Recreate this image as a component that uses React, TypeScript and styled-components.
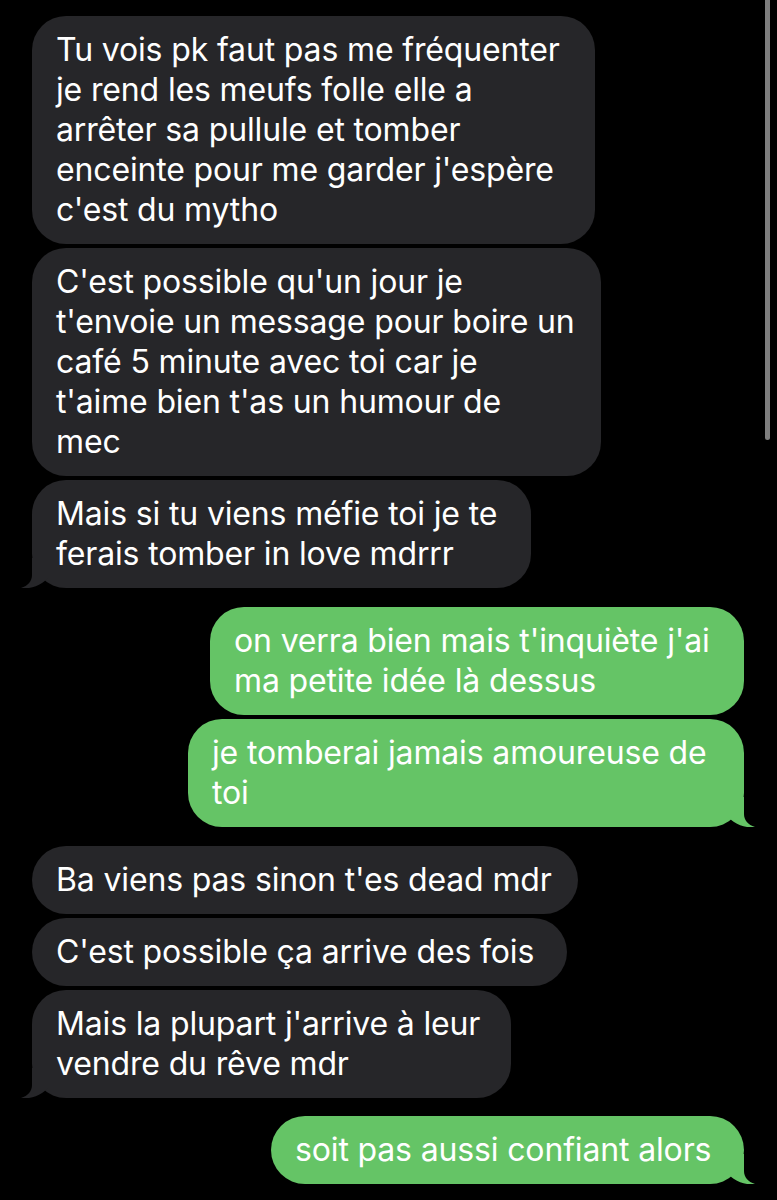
import React from "react";
import styled, { createGlobalStyle } from "styled-components";

const Global = createGlobalStyle`
  html, body { margin: 0; padding: 0; background: #000; }
  body { width: 777px; height: 1200px; overflow: hidden; }
`;

const Screen = styled.div`
  position: relative;
  width: 777px;
  height: 1200px;
  background: #000;
  box-sizing: border-box;
  padding-top: 16px;
  display: flex;
  flex-direction: column;
  font-family: Inter, "Noto Sans", "Liberation Sans", sans-serif;
`;

const Group = styled.div<{ $mine?: boolean; $top?: number }>`
  display: flex;
  flex-direction: column;
  gap: 4px;
  align-items: ${(p) => (p.$mine ? "flex-end" : "flex-start")};
  padding: 0 ${(p) => (p.$mine ? "33px" : "0")} 0 ${(p) => (p.$mine ? "0" : "32px")};
  margin-top: ${(p) => p.$top ?? 0}px;
`;

const Bubble = styled.div<{ $mine?: boolean; $w: number }>`
  position: relative;
  box-sizing: border-box;
  width: ${(p) => p.$w}px;
  padding: 14px 0 14px 24px;
  border-radius: 34px;
  background: ${(p) => (p.$mine ? "#65c466" : "#262629")};
  color: #fff;
  font-size: 32px;
  line-height: 40px;
  letter-spacing: -0.15px;
  white-space: pre;
`;

const Tail = styled.svg<{ $mine?: boolean }>`
  position: absolute;
  bottom: 0;
  width: 30px;
  height: 30px;
  ${(p) => (p.$mine ? "right: -11px; transform: scaleX(-1);" : "left: -11px;")}
`;

const Line = styled.span`
  position: relative;
`;

const ScrollBar = styled.div`
  position: absolute;
  top: 0;
  left: 765px;
  width: 5px;
  height: 440px;
  border-radius: 0 0 3px 3px;
  background: #7e7e7e;
`;

type Msg = { text: string; w: number; tail?: boolean };

const BubbleTail = ({ mine }: { mine?: boolean }) => (
  <Tail $mine={mine} viewBox="0 0 30 30">
    <path
      d="M11,0 L11,17 C11,23 7,28 0,30 C8,31 15,29 21,25 C24,23 26,21 28,19 L28,0 Z"
      fill={mine ? "#65c466" : "#262629"}
    />
  </Tail>
);

const Message = ({ m, mine }: { m: Msg; mine?: boolean }) => (
  <Bubble $mine={mine} $w={m.w}>
    {m.tail && <BubbleTail mine={mine} />}
    <Line>{m.text}</Line>
  </Bubble>
);

const groups: { mine?: boolean; top: number; msgs: Msg[] }[] = [
  {
    top: 0,
    msgs: [
      {
        text:
          "Tu vois pk faut pas me fréquenter\nje rend les meufs folle elle a\narrêter sa pullule et tomber\nenceinte pour me garder j'espère\nc'est du mytho",
        w: 563,
      },
      {
        text:
          "C'est possible qu'un jour je\nt'envoie un message pour boire un\ncafé 5 minute avec toi car je\nt'aime bien t'as un humour de\nmec",
        w: 569,
      },
      { text: "Mais si tu viens méfie toi je te\nferais tomber in love mdrrr", w: 499, tail: true },
    ],
  },
  {
    mine: true,
    top: 19,
    msgs: [
      { text: "on verra bien mais t'inquiète j'ai\nma petite idée là dessus", w: 534 },
      { text: "je tomberai jamais amoureuse de\ntoi", w: 556, tail: true },
    ],
  },
  {
    top: 19,
    msgs: [
      { text: "Ba viens pas sinon t'es dead mdr", w: 546 },
      { text: "C'est possible ça arrive des fois", w: 535 },
      { text: "Mais la plupart j'arrive à leur\nvendre du rêve mdr", w: 479, tail: true },
    ],
  },
  {
    mine: true,
    top: 18,
    msgs: [{ text: "soit pas aussi confiant alors", w: 473, tail: true }],
  },
];

export default function App() {
  return (
    <>
      <Global />
      <Screen>
        {groups.map((g, i) => (
          <Group key={i} $mine={g.mine} $top={g.top}>
            {g.msgs.map((m, j) => (
              <Message key={j} m={m} mine={g.mine} />
            ))}
          </Group>
        ))}
        <ScrollBar />
      </Screen>
    </>
  );
}
